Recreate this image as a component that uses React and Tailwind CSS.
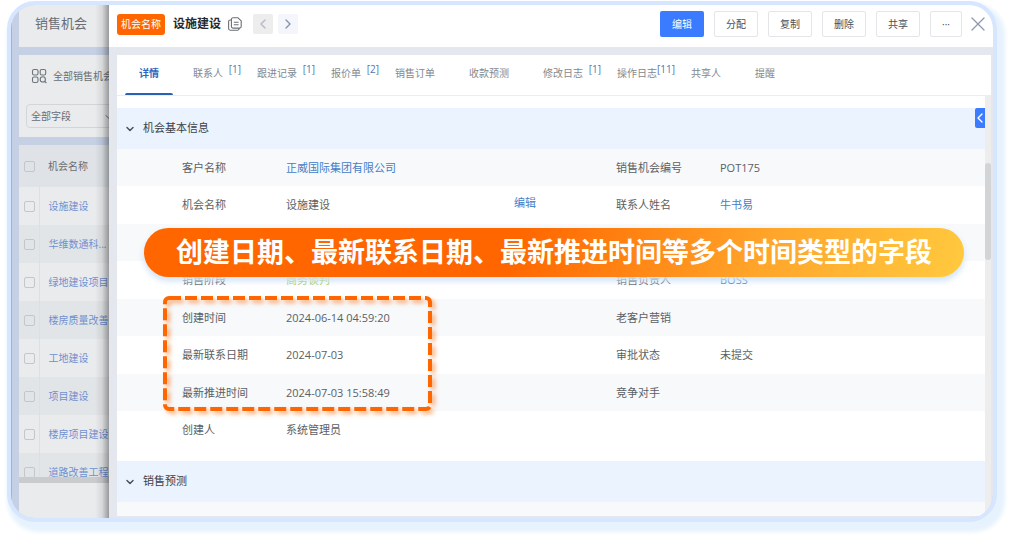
import { ChevronLeft, ChevronRight, ChevronDown, X } from 'lucide-react';

const tabs = [
  { name: '详情', active: true },
  { name: '联系人', count: 1 },
  { name: '跟进记录', count: 1 },
  { name: '报价单', count: 2 },
  { name: '销售订单' },
  { name: '收款预测' },
  { name: '修改日志', count: 1 },
  { name: '操作日志', count: 11 },
  { name: '共享人' },
  { name: '提醒' },
];

const deals = ['设施建设', '华维数通科...', '绿地建设项目', '楼房质量改善', '工地建设', '项目建设', '楼房项目建设', '道路改善工程'];

const fields = [
  [{ label: '客户名称', value: '正威国际集团有限公司', link: true }, { label: '销售机会编号', value: 'POT175' }],
  [{ label: '机会名称', value: '设施建设', edit: true }, { label: '联系人姓名', value: '牛书易', link: true }],
  [{ label: '', value: '' }, { label: '', value: '' }],
  [{ label: '销售阶段', value: '商务谈判', stage: true }, { label: '销售负责人', value: 'BOSS', link: true }],
  [{ label: '创建时间', value: '2024-06-14 04:59:20' }, { label: '老客户营销', value: '' }],
  [{ label: '最新联系日期', value: '2024-07-03' }, { label: '审批状态', value: '未提交' }],
  [{ label: '最新推进时间', value: '2024-07-03 15:58:49' }, { label: '竞争对手', value: '' }],
  [{ label: '创建人', value: '系统管理员' }, { label: '', value: '' }],
];

function GridSearchIcon() {
  return (
    <svg viewBox="0 0 16 16" className="size-4 shrink-0" fill="none" stroke="#6f747a" strokeWidth="1.1" aria-hidden="true">
      <rect x="1.5" y="1.5" width="5.5" height="5.5" rx="1.6" />
      <rect x="9.2" y="1.5" width="5.5" height="5.5" rx="1.6" />
      <rect x="1.5" y="9" width="5.5" height="5.5" rx="1.6" />
      <circle cx="11.8" cy="11.4" r="2.6" />
      <path d="M13.6 13.3 15.4 15" />
    </svg>
  );
}

function CopyIcon() {
  return (
    <svg viewBox="0 0 16 16" className="size-4" fill="none" stroke="#6b6f75" strokeWidth="1.1" strokeLinejoin="round" aria-hidden="true">
      <path d="M6 1.8h5l3.2 3.1v5.6a1.6 1.6 0 0 1-1.6 1.6H6a1.6 1.6 0 0 1-1.6-1.6V3.4A1.6 1.6 0 0 1 6 1.8z" />
      <path d="M4.4 4H3.2a1.6 1.6 0 0 0-1.6 1.6v7a1.6 1.6 0 0 0 1.6 1.6h7.4a1.6 1.6 0 0 0 1.6-1.6v-.5M6.8 6.2h4.8M6.8 8.8h4.8" />
    </svg>
  );
}

function Field({ field }) {
  const tone = field.link ? 'text-[#4480c8]' : field.stage ? 'text-[#a9c94f]' : 'text-[#5c5f63]';
  return (
    <div className="flex items-center pt-px pr-[15px] pl-[65px]">
      <dt className="w-[104px] shrink-0 text-[#5c5f63]">{field.label}</dt>
      <dd className={'flex-1 ' + tone}>{field.link ? <a href="#record">{field.value}</a> : field.value}</dd>
      {field.edit && <button type="button" className="pb-1 text-[#4480c8]">编辑</button>}
    </div>
  );
}

function SectionTitle({ children }) {
  return (
    <h2 className="flex h-[41px] items-center gap-[7px] bg-[#ebf3fe] pl-[7px] text-[11px] text-[#3c4046]">
      <ChevronDown className="size-3" strokeWidth={3} color="#4d535b" />
      {children}
    </h2>
  );
}

function Sidebar() {
  return (
    <aside className="relative flex w-[90px] shrink-0 flex-col overflow-hidden text-[10px] whitespace-nowrap text-[#6a6e74]">
      <h1 className="h-[42px] bg-[#e9ebed] pt-2 pl-4 text-[13px] leading-5">销售机会</h1>
      <div className="mt-2 flex h-[82px] flex-col gap-5 bg-[#e9ebed] pt-[13px]">
        <div className="flex h-4 items-center gap-[6px] pl-3">
          <GridSearchIcon />
          <span>全部销售机会</span>
        </div>
        <select aria-label="字段" defaultValue="all" className="ml-[7px] h-6 w-[120px] shrink-0 appearance-none rounded-sm border border-[#d3d6d9] bg-transparent pl-1 text-[10px]">
          <option value="all">全部字段</option>
        </select>
        <ChevronDown className="pointer-events-none absolute top-[106px] left-[84px] size-3" color="#6a6e74" />
      </div>
      <div className="mt-2 h-[332px] overflow-hidden bg-[#e9ebed]">
        <table className="w-[130px] table-fixed border-collapse">
          <thead>
            <tr className="h-[42px] bg-[#dfe3e7]">
              <th className="w-5 pl-[5px]"><input type="checkbox" aria-label="全选" className="block size-[11px] appearance-none rounded-xs border border-[#c3c7cb]" /></th>
              <th className="pl-[9px] text-left font-normal">机会名称</th>
            </tr>
          </thead>
          <tbody>
            {deals.map((name) => (
              <tr key={name} className="h-[38px] even:bg-[#e2e5e7]">
                <td className="w-5 border-r border-[#dde0e3] pl-[5px]"><input type="checkbox" aria-label={name} className="block size-[11px] appearance-none rounded-xs border border-[#c3c7cb]" /></td>
                <td className="pl-[9px] text-[#6e90d0]"><a href="#deal">{name}</a></td>
              </tr>
            ))}
          </tbody>
        </table>
      </div>
      <div className="h-[6px] rounded-l-full bg-[#c9cbcd]" />
      <div className="flex-1 bg-[#e9ebed]" />
      <div className="pointer-events-none absolute inset-y-0 right-0 w-[14px] bg-linear-to-r from-transparent via-black/8 to-black/35" />
    </aside>
  );
}

export default function App() {
  const action = 'h-[26px] w-11 rounded-xs border border-[#e3e5e8] bg-white text-[10px] text-[#4b4f55]';
  return (
    <main className="pt-px pr-3 pb-[14px] pl-[7px] font-['Open_Sans','Noto_Sans_CJK_SC',sans-serif]">
      <div className="overflow-hidden rounded-[28px] border-4 border-[#d6e6ff] bg-[#c5d0e4] shadow-[4px_6px_4px_4px_#e6f2fd]">
        <div className="flex border-l border-[#8db6f2] pl-[7px]">
          <Sidebar />
          <section className="flex min-w-0 flex-1 flex-col bg-[#e4e8ee]">
            <header className="flex h-[42px] shrink-0 items-center bg-white pr-[3px] pb-1 pl-2">
              <span className="flex h-[21px] items-center rounded-[3px] bg-[#ff6600] px-1 text-[10px] text-white">机会名称</span>
              <strong className="ml-2 text-[12px] text-[#26282b]">设施建设</strong>
              <button type="button" aria-label="复制名称" className="ml-[6px]"><CopyIcon /></button>
              <button type="button" aria-label="上一条" className="ml-[10px] flex size-5 items-center justify-center rounded-xs bg-[#ededed]"><ChevronLeft className="size-4" color="#b4bac4" /></button>
              <button type="button" aria-label="下一条" className="ml-[5px] flex size-5 items-center justify-center rounded-xs bg-[#f4f6fb]"><ChevronRight className="size-4" color="#8593ad" /></button>
              <div className="ml-auto flex items-center gap-[10px]">
                <button type="button" className="h-[26px] w-11 rounded-xs bg-[#3a7bff] text-[10px] text-white">编辑</button>
                <button type="button" className={action}>分配</button>
                <button type="button" className={action}>复制</button>
                <button type="button" className={action}>删除</button>
                <button type="button" className={action}>共享</button>
                <button type="button" aria-label="更多" className="h-[26px] w-8 rounded-xs border border-[#e3e5e8] bg-white text-[10px] text-[#4b4f55]">···</button>
              </div>
              <button type="button" aria-label="关闭" className="ml-1"><X className="size-6" strokeWidth={1.3} color="#8f98ad" /></button>
            </header>
            <nav className="mt-2 mr-[2px] ml-2 flex h-[41px] shrink-0 gap-[34px] border-b border-[#ebedf0] bg-white pl-[22px] text-[10px] whitespace-nowrap text-[#85888d]">
              {tabs.map((tab) => (
                <a key={tab.name} href="#tab" className={tab.active ? 'relative flex items-center pb-[3px] font-bold text-[#2f66bd]' : 'relative flex items-center pb-[3px]'}>
                  {tab.name}
                  {tab.count && <sup className="absolute top-2 -right-[18px] text-[10px] leading-3 text-[#5676ab]">[{tab.count}]</sup>}
                  {tab.active && <span className="absolute -right-[14px] bottom-0 -left-[14px] h-[2px] rounded-t-full bg-[#2860b8]" />}
                </a>
              ))}
            </nav>
            <div className="mr-[2px] mb-[2px] ml-2 flex">
              <div className="relative min-w-0 flex-1 bg-white pt-3">
                <SectionTitle>机会基本信息</SectionTitle>
                <dl className="pb-3 text-[11px]">
                  {fields.map((row, i) => (
                    <div key={i} className="grid h-[37px] grid-cols-2 odd:bg-[#f7f9fb] even:h-[38px]">
                      <Field field={row[0]} />
                      <Field field={row[1]} />
                    </div>
                  ))}
                </dl>
                <SectionTitle>销售预测</SectionTitle>
                <div className="h-[14px] bg-[#f7f9fb]" />
                <button type="button" aria-label="展开侧栏" className="absolute top-3 right-0 flex h-5 w-[10px] items-center justify-center rounded-l-xs bg-[#3a7bff]">
                  <ChevronLeft className="size-4 shrink-0" color="#ffffff" />
                </button>
                <svg className="absolute top-[200px] left-[46px] h-[118px] w-[272px] overflow-visible drop-shadow-[3px_3px_2px_#ff660088]" fill="none" aria-hidden="true">
                  <rect x="2" y="2" width="265" height="111" rx="4" stroke="#ff6600" strokeWidth="4" strokeDasharray="12 4" />
                </svg>
                <p className="absolute top-[132px] right-[21px] left-[27px] flex h-[49px] items-center justify-center rounded-full bg-[linear-gradient(110deg,#ff6600_45%,#ffa52a_75%,#ffca3f)] text-[27px] font-bold whitespace-nowrap text-white shadow-[0_4px_6px_#cfe3f7]">
                  创建日期、最新联系日期、最新推进时间等多个时间类型的字段
                </p>
              </div>
              <div className="w-[6px] shrink-0 bg-[#ededee] pt-[67px]">
                <div className="h-[97px] rounded-full bg-[#d3d4d6]" />
              </div>
            </div>
          </section>
        </div>
      </div>
    </main>
  );
}
